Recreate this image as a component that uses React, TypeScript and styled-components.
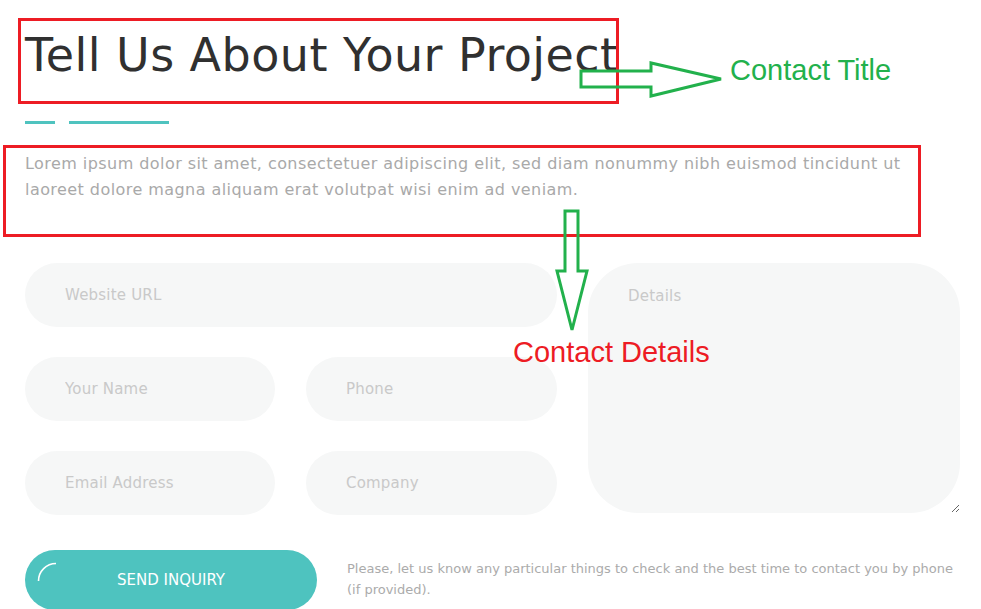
import styled, { createGlobalStyle } from 'styled-components';

/** style */
const GlobalStyle = createGlobalStyle`
  html, body {
    margin: 0;
    padding: 0;
    background: #ffffff;
  }

  body {
    font-family: 'DejaVu Sans', 'Open Sans', sans-serif;
  }
`;

const Page = styled.div`
  position: relative;
  box-sizing: border-box;
  width: 981px;
  height: 609px;
  padding: 32px 21px 0 25px;
  overflow: hidden;
`;

const Title = styled.h2`
  margin: 0;
  font-size: 46px;
  font-weight: 400;
  line-height: 1;
  letter-spacing: 0.45px;
  color: #303030;
  white-space: nowrap;
`;

const Divider = styled.div`
  display: flex;
  gap: 14px;
  margin-top: 43px;
`;

const DividerLine = styled.span<{ $width: number }>`
  display: block;
  width: ${(p) => p.$width}px;
  height: 3px;
  background: #4fc3bf;
`;

const Intro = styled.p`
  margin: 27px 0 0;
  width: 895px;
  font-size: 16px;
  line-height: 26px;
  letter-spacing: 0.44px;
  color: #a9a9a9;
`;

const FormGrid = styled.form`
  display: grid;
  grid-template-columns: 250px 251px 372px;
  grid-template-rows: repeat(3, 64px);
  column-gap: 31px;
  row-gap: 30px;
  margin-top: 60px;
`;

const Field = styled.input<{ $wide?: boolean }>`
  grid-column: ${(p) => (p.$wide ? '1 / span 2' : 'auto')};
  box-sizing: border-box;
  width: 100%;
  height: 64px;
  padding: 0 40px;
  border: none;
  border-radius: 32px;
  background: #f6f7f7;
  font-family: inherit;
  font-size: 15px;
  letter-spacing: 0.2px;
  color: #555;
  outline: none;

  &::placeholder {
    color: #c9c9c9;
  }
`;

const Details = styled.textarea`
  grid-column: 3;
  grid-row: 1 / span 3;
  box-sizing: border-box;
  width: 372px;
  height: 250px;
  padding: 24px 40px;
  border: none;
  border-radius: 50px;
  background: #f6f7f7;
  font-family: inherit;
  font-size: 15px;
  letter-spacing: 0.2px;
  color: #555;
  outline: none;

  &::placeholder {
    color: #c9c9c9;
  }
`;

const Footer = styled.div`
  display: flex;
  align-items: flex-start;
  gap: 30px;
  margin-top: 35px;
`;

const SendButton = styled.button`
  position: relative;
  flex: 0 0 292px;
  height: 60px;
  border: none;
  border-radius: 30px;
  background: #4ec3bf;
  color: #ffffff;
  font-family: inherit;
  font-size: 15px;
  text-transform: uppercase;
  cursor: pointer;
`;

const Spinner = styled.svg`
  position: absolute;
  left: 12px;
  top: 12px;
`;

const Note = styled.p`
  margin: 8px 0 0;
  font-size: 13px;
  line-height: 21px;
  color: #ababab;
`;

// annotation layer drawn over the page
const Frame = styled.div<{ $left: number; $top: number; $w: number; $h: number }>`
  position: absolute;
  left: ${(p) => p.$left}px;
  top: ${(p) => p.$top}px;
  width: ${(p) => p.$w}px;
  height: ${(p) => p.$h}px;
  box-sizing: border-box;
  border: 3px solid #ed1c24;
  pointer-events: none;
`;

const Arrows = styled.svg`
  position: absolute;
  left: 0;
  top: 0;
  pointer-events: none;
`;

const Label = styled.span<{ $color: string; $left: number; $top: number }>`
  position: absolute;
  left: ${(p) => p.$left}px;
  top: ${(p) => p.$top}px;
  font-family: 'Liberation Sans', Arial, sans-serif;
  font-size: 29px;
  line-height: 1;
  white-space: nowrap;
  color: ${(p) => p.$color};
`;

/**
 * component
 * contact form with annotations
 */
const App = () => {
  return (
    <>
      <GlobalStyle />
      <Page>
        <Title>Tell Us About Your Project</Title>
        <Divider>
          <DividerLine $width={30} />
          <DividerLine $width={100} />
        </Divider>
        <Intro>
          Lorem ipsum dolor sit amet, consectetuer adipiscing elit, sed diam nonummy nibh euismod tincidunt ut
          laoreet dolore magna aliquam erat volutpat wisi enim ad veniam.
        </Intro>

        <FormGrid onSubmit={(e) => e.preventDefault()}>
          <Field $wide placeholder="Website URL" />
          <Details placeholder="Details" />
          <Field placeholder="Your Name" />
          <Field placeholder="Phone" />
          <Field placeholder="Email Address" />
          <Field placeholder="Company" />
        </FormGrid>

        <Footer>
          <SendButton type="button">
            <Spinner width="20" height="20" viewBox="0 0 20 20">
              <path d="M1.5 19 A17.5 17.5 0 0 1 19 1.5" fill="none" stroke="#fff" strokeWidth="1.6" />
            </Spinner>
            Send Inquiry
          </SendButton>
          <Note>
            Please, let us know any particular things to check and the best time to contact you by phone (if
            provided).
          </Note>
        </Footer>

        <Frame $left={18} $top={18} $w={601} $h={86} />
        <Frame $left={3} $top={145} $w={918} $h={92} />
        <Arrows width="981" height="609" viewBox="0 0 981 609">
          <polygon
            points="581,71 651,71 651,63 721,79 651,96 651,87 581,87"
            fill="none"
            stroke="#22b14c"
            strokeWidth="3"
          />
          <polygon
            points="565,211 578,211 578,271 587,271 572,330 557,271 565,271"
            fill="none"
            stroke="#22b14c"
            strokeWidth="3"
          />
        </Arrows>
        <Label $color="#22b14c" $left={730} $top={56}>
          Contact Title
        </Label>
        <Label $color="#ed1c24" $left={513} $top={338}>
          Contact Details
        </Label>
      </Page>
    </>
  );
};

export default App;
